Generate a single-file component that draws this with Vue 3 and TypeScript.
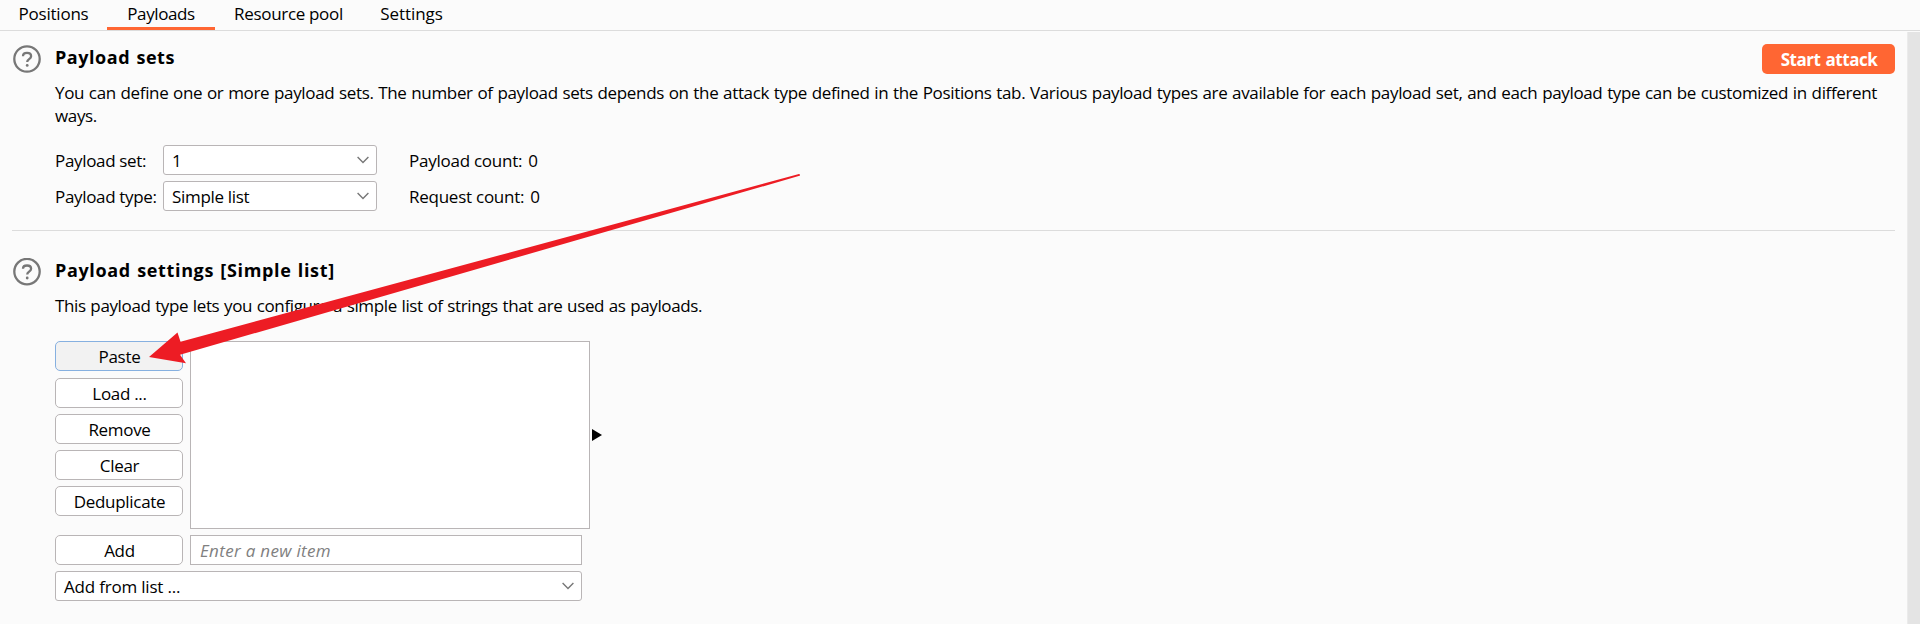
<script setup lang="ts">
interface Tab { label: string; cls: string; active?: boolean }

const tabs: Tab[] = [
  { label: 'Positions', cls: 'tab-positions' },
  { label: 'Payloads', cls: 'tab-payloads', active: true },
  { label: 'Resource pool', cls: 'tab-pool' },
  { label: 'Settings', cls: 'tab-settings' },
]

const rows = [
  { label: 'Payload set:', value: '1', stat: 'Payload count:', count: 0 },
  { label: 'Payload type:', value: 'Simple list', stat: 'Request count:', count: 0 },
]

const actions = ['Paste', 'Load ...', 'Remove', 'Clear', 'Deduplicate']
</script>

<template>
  <div class="app">
    <nav class="tabs">
      <div v-for="t in tabs" :key="t.label" class="tab" :class="[t.cls, { active: t.active }]">
        <span>{{ t.label }}</span>
      </div>
    </nav>

    <div class="body">
      <main class="content">
        <section class="section">
          <svg class="help" viewBox="0 0 28 28">
            <circle cx="14" cy="14" r="12.7" />
            <path d="M10 11.2C10 9.2 11.6 7.9 14 7.9s4.1 1.4 4.1 3.3c0 2.8-3.9 3-3.9 5.7" />
            <circle class="dot" cx="14.2" cy="20.4" r="1.4" />
          </svg>
          <div class="panel">
            <header class="head">
              <h2>Payload sets</h2>
              <button class="start">Start attack</button>
            </header>
            <p class="desc first">
              You can define one or more payload sets. The number of payload sets depends on the attack type defined in the Positions tab. Various payload types are available for each payload set, and each payload type can be customized in different ways.
            </p>
            <div class="form">
              <template v-for="r in rows" :key="r.label">
                <label>{{ r.label }}</label>
                <div class="select">
                  <span>{{ r.value }}</span>
                  <svg class="chev" viewBox="0 0 12 8"><path d="M0.6 1 6 6.4 11.4 1" /></svg>
                </div>
                <div class="stat"><span>{{ r.stat }}</span><span>{{ r.count }}</span></div>
              </template>
            </div>
          </div>
        </section>

        <hr class="rule" />

        <section class="section">
          <svg class="help" viewBox="0 0 28 28">
            <circle cx="14" cy="13.6" r="12.7" />
            <path d="M10 10.8C10 8.8 11.6 7.5 14 7.5s4.1 1.4 4.1 3.3c0 2.8-3.9 3-3.9 5.7" />
            <circle class="dot" cx="14.2" cy="20" r="1.4" />
          </svg>
          <div class="panel">
            <h2 class="wide">Payload settings [Simple list]</h2>
            <p class="desc second">This payload type lets you configure a simple list of strings that are used as payloads.</p>
            <div class="editor">
              <div class="actions">
                <button v-for="a in actions" :key="a" class="btn" :class="{ focused: a === 'Paste' }">{{ a }}</button>
              </div>
              <div class="list"></div>
              <svg class="expand" viewBox="0 0 10 12"><path d="M0 0 10 6 0 12z" /></svg>
            </div>
            <div class="add">
              <button class="btn">Add</button>
              <div class="input">Enter a new item</div>
            </div>
            <div class="select from-list">
              <span>Add from list ...</span>
              <svg class="chev" viewBox="0 0 12 8"><path d="M0.6 1 6 6.4 11.4 1" /></svg>
            </div>
          </div>
        </section>
      </main>
      <div class="scrollbar"></div>
    </div>

    <svg class="arrow" viewBox="0 0 1920 624">
      <path d="M149 357 177.5 332.5 180.5 341.8 799 174Q801 174.6 799.5 175.8L180 354.8 186 363.3Z" />
    </svg>
  </div>
</template>

<style>
body { margin: 0; background: #fbfbfb; }
</style>

<style scoped>
.app {
  position: relative;
  width: 1920px;
  height: 624px;
  overflow: hidden;
  display: flex;
  flex-direction: column;
  background: #fbfbfb;
  color: #000;
  font: 17px/23px "Open Sans", "Noto Sans", sans-serif;
  letter-spacing: -0.22px;
}
.app * { box-sizing: border-box; }

.tabs { display: flex; height: 31px; border-bottom: 1px solid #dcdcdc; flex: none; }
.tab { height: 30px; line-height: 27px; text-align: center; border-bottom: 3px solid transparent; }
.tab.active { border-bottom-color: #ff6633; letter-spacing: -0.4px; }
.tab-positions { width: 107px; }
.tab-payloads { width: 108px; }
.tab-pool { width: 147px; letter-spacing: -0.32px; }
.tab-settings { width: 99px; letter-spacing: -0.05px; }

.body { flex: 1; display: flex; }
.content { flex: 1; padding: 13px 12px 0 12px; }
.scrollbar { width: 13px; margin-top: 1px; background: #e4e4e4; border-left: 1px solid #ebebeb; }

.section { display: flex; }
.help { width: 28px; height: 28px; margin: 1px 15px 0 1px; fill: none; stroke: #777; stroke-width: 2.3; flex: none; }
.help .dot { fill: #777; stroke: none; }
.panel { flex: 1; min-width: 0; margin-left: -1px; }

h2 { margin: 0; font-size: 18px; line-height: 26px; font-weight: 700; letter-spacing: 0.55px; word-spacing: 1px; }
h2.wide { letter-spacing: 0.65px; }
.head { display: flex; justify-content: space-between; align-items: flex-start; height: 30px; }
.start {
  width: 133px; height: 30px; padding: 0 0 0 1px; border: 0; border-radius: 5px;
  background: #ff6633; color: #fff; font: 700 17px/29px "Open Sans", sans-serif; letter-spacing: -0.45px; word-spacing: 1px;
}

.desc { margin: 0; }
.desc.first { margin-top: 7px; letter-spacing: -0.35px; word-spacing: 0.67px; }
.desc.second { margin-top: 11px; letter-spacing: -0.37px; word-spacing: 0.6px; }

.form {
  display: grid; grid-template-columns: 108px 214px 1fr; grid-auto-rows: 30px; row-gap: 6px;
  margin-top: 18px; line-height: 32px;
}
.form label { letter-spacing: -0.33px; }
.stat { padding-left: 32px; display: flex; gap: 6px; letter-spacing: -0.25px; }
.select {
  display: flex; align-items: center; justify-content: space-between; height: 30px; padding: 0 7px 0 8px;
  border: 1px solid #b9b5b6; border-radius: 3px; background: #fff; letter-spacing: -0.32px;
}
.select span { padding-top: 1px; line-height: 29px; }
.chev { width: 12px; height: 8px; fill: none; stroke: #777; stroke-width: 1.4; }

.rule { margin: 19px 0 26px; border: 0; height: 1px; background: #dcdcdc; }

.editor { display: flex; margin-top: 24px; }
.actions { display: flex; flex-direction: column; gap: 6px; width: 128px; }
.btn {
  width: 128px; height: 30px; padding: 1px 0 0 1px; border: 1px solid #b9b5b6; border-radius: 5px; background: #fff;
  color: #000; font: inherit; line-height: 27px; letter-spacing: -0.3px; text-align: center;
}
.btn.focused { margin-bottom: 1px; background: #f2f2f2; border-color: #86b0e0; }
.list { width: 400px; height: 188px; margin-left: 7px; border: 1px solid #b9b5b6; background: #fff; }
.expand { width: 10px; height: 12px; margin: 88px 0 0 2px; }
.add { display: flex; gap: 7px; margin-top: 6px; }
.input {
  width: 392px; height: 30px; padding: 1px 0 0 9px; border: 1px solid #b9b5b6; background: #fff;
  color: #808080; font-style: italic; line-height: 28px; letter-spacing: 0.32px;
}
.from-list { width: 527px; margin-top: 6px; letter-spacing: -0.2px; }

.arrow { position: absolute; inset: 0; width: 1920px; height: 624px; fill: #ed1c24; pointer-events: none; }
</style>
